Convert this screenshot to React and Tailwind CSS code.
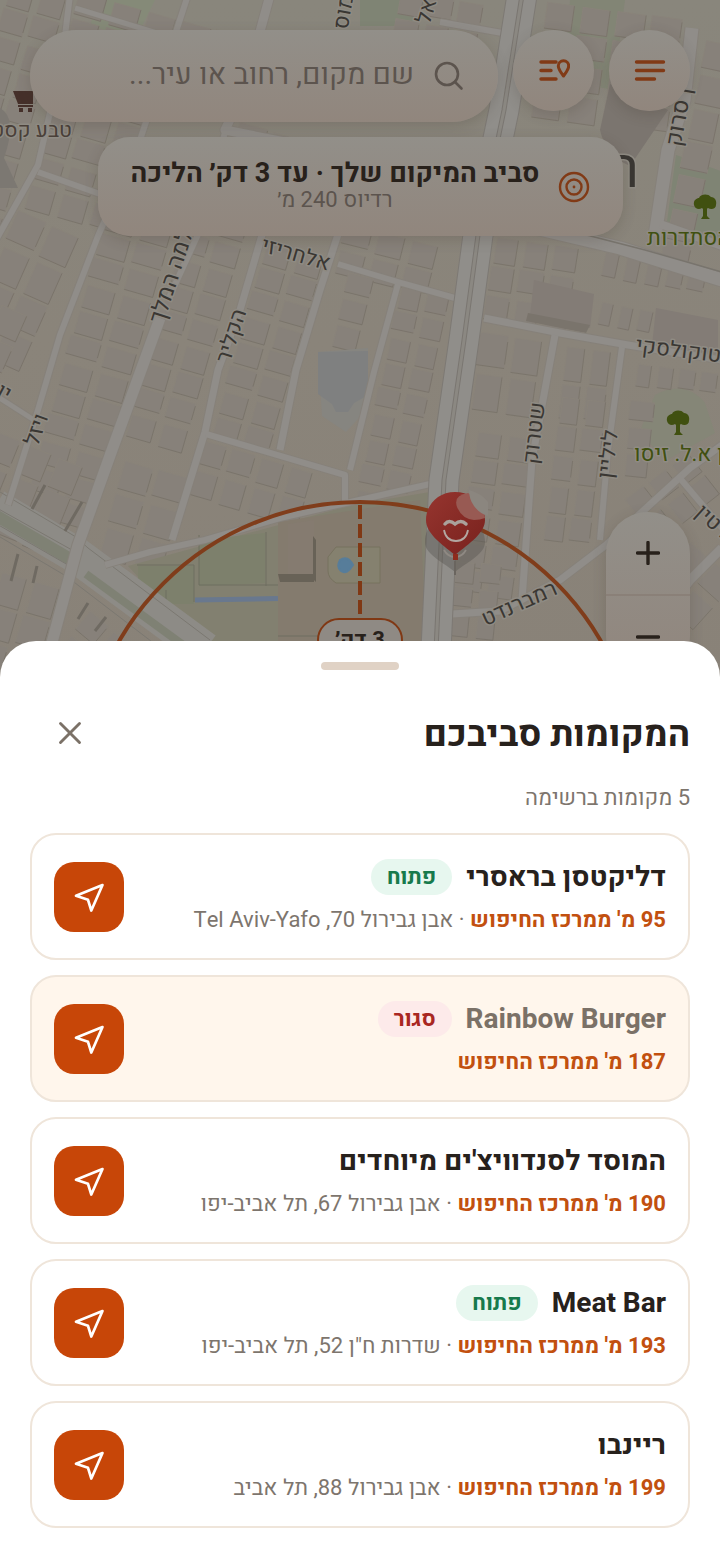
import { X } from "lucide-react";

const places = [
  { name: "דליקטסן בראסרי", status: "open", distance: 95, address: "אבן גבירול 70, Tel Aviv-Yafo" },
  { name: "Rainbow Burger", status: "closed", distance: 187 },
  { name: "המוסד לסנדוויצ'ים מיוחדים", distance: 190, address: "אבן גבירול 67, תל אביב-יפו" },
  { name: "Meat Bar", status: "open", distance: 193, address: 'שדרות ח"ן 52, תל אביב-יפו' },
  { name: "ריינבו", distance: 199, address: "אבן גבירול 88, תל אביב" },
];

/* Blocks of houses: x, y, angle, columns, rows, cell width, cell height */
const blocks = [
  [78, -10, 16, 5, 3, 36, 27],
  [-20, -30, 16, 3, 9, 32, 29],
  [60, 75, 16, 3, 5, 34, 28],
  [18, 210, 24, 2, 4, 36, 38],
  [-30, 290, 24, 2, 7, 34, 34],
  [108, 205, 16, 2, 12, 37, 27],
  [-6, 430, 22, 3, 3, 34, 34],
  [190, 205, 16, 2, 9, 33, 27],
  [124, 460, 16, 2, 3, 36, 34],
  [203, 440, 16, 4, 2, 30, 30],
  [266, 240, 16, 2, 8, 33, 26],
  [345, 222, 14, 3, 2, 34, 27],
  [400, 285, 12, 2, 9, 28, 26],
  [348, 272, 14, 1, 3, 32, 26],
  [495, 235, 9, 3, 3, 30, 30],
  [604, 250, 12, 5, 1, 22, 28],
  [600, 300, 12, 3, 1, 20, 26],
  [480, 332, 8, 2, 2, 34, 40],
  [476, 430, 8, 2, 6, 32, 28],
  [565, 345, 7, 2, 2, 26, 38],
  [560, 395, 7, 2, 5, 26, 30],
  [636, 362, 8, 4, 1, 22, 26],
  [630, 400, 6, 1, 3, 30, 26],
  [625, 500, -38, 3, 2, 28, 28],
  [690, 540, 42, 2, 3, 34, 34],
  [0, 570, 16, 2, 3, 34, 36],
  [90, 610, 40, 2, 2, 30, 30],
  [545, 0, 8, 4, 4, 36, 30],
  [400, -10, 10, 3, 4, 30, 28],
  [706, 40, 12, 1, 7, 34, 34],
  [240, 122, 16, 6, 1, 34, 24],
  [455, 560, 6, 2, 3, 26, 26],
];

const roads = [
  ["M70 -5 L62 60 L38 165 L-4 240", 7],
  ["M75 8 L160 34 L230 60", 6],
  ["M38 172 L100 194 L180 215", 7],
  ["M188 -5 L170 50 L140 140 L98 236 L60 335 L38 410 L8 505", 7],
  ["M228 120 L200 230 L168 300", 7],
  ["M160 318 L112 450 L78 545 L50 650", 12],
  ["M270 -5 L244 90 L225 130 L300 145", 10],
  ["M262 235 L240 310 L218 370 L205 432 L172 540", 8],
  ["M340 228 L320 290 L296 370 L280 450", 8],
  ["M206 434 L345 475 L345 502", 7],
  ["M338 264 L398 282 L462 300", 7],
  ["M398 284 L374 372 L350 470", 7],
  ["M-5 395 L34 420", 6],
  ["M105 565 L150 552 L205 540 L280 518 L355 501 L430 484", 7],
  ["M484 318 L560 333 L628 345 L722 360", 8],
  ["M555 335 L532 460 L522 600", 8],
  ["M622 347 L608 450 L600 540", 7],
  ["M692 28 L684 100 L668 150 L655 236", 14],
  ["M535 228 L620 248 L722 280", 14],
  ["M660 224 L722 246", 9],
  ["M452 614 L500 611 L560 580 L606 545 L690 468 L722 445", 8],
  ["M678 476 L722 528", 7],
  ["M722 548 L690 580 L660 620", 10],
  ["M440 22 L508 34", 7],
];

function Block({ b }) {
  const [x, y, angle, cols, rows, cw, ch] = b;
  const cells = [];
  for (let r = 0; r < rows; r++) {
    for (let c = 0; c < cols; c++) {
      const k = Math.abs(Math.sin(x * 3 + y + r * 7.3 + c * 13.1));
      const w = cw - 5 - k * 4;
      const h = ch - 4 - (1 - k) * 4;
      const px = c * cw + k * 3;
      const py = r * ch + k * 2;
      cells.push(
        <g key={`${r}-${c}`}>
          <path d={`M${px} ${py}h${w}v${h}h${-w}z`} fill="#87817a" stroke="#89837a" strokeWidth="1" />
          <path d={`M${px} ${py + h}h${w}v${-h}`} fill="none" stroke="#787269" strokeWidth="0.8" strokeDasharray={k > 0.5 ? "none" : `${w} 4 ${h * 0.7} 99`} />
        </g>
      );
    }
  }
  return <g transform={`translate(${x} ${y}) rotate(${angle})`}>{cells}</g>;
}

function Label({ x, y, angle = 0, anchor = "middle", size = 22, fill = "#3a3733", children }) {
  return (
    <text
      transform={`translate(${x} ${y}) rotate(${angle})`}
      textAnchor={anchor}
      direction="rtl"
      fontSize={size}
      fill={fill}
      stroke="#8f8b83"
      strokeWidth="3"
      strokeLinejoin="round"
      paintOrder="stroke"
    >
      {children}
    </text>
  );
}

function Tree({ x, y }) {
  return (
    <g transform={`translate(${x} ${y})`} fill="#405010">
      <path d="M-11 -1c-1-5 3-7 5-7 1-4 9-5 12-1 4 0 6 4 5 8 0 4-5 5-8 3-3 2-4 2-6 0-3 2-7 1-8-3z" />
      <path d="M-2 0h4v10l3 3h-9l2-3z" />
    </g>
  );
}

function MapDrawing() {
  return (
    <svg viewBox="0 0 720 680" preserveAspectRatio="xMidYMin slice" className="absolute inset-0 size-full" aria-hidden="true">
      <defs>
        <linearGradient id="land" x1="0" y1="0" x2="0" y2="1">
          <stop offset="0" stopColor="#89867c" />
          <stop offset="0.5" stopColor="#8a847a" />
          <stop offset="1" stopColor="#898278" />
        </linearGradient>
        <linearGradient id="balloon" x1="0" y1="0" x2="1" y2="1">
          <stop offset="0" stopColor="#96352f" />
          <stop offset="1" stopColor="#78211d" />
        </linearGradient>
      </defs>
      <rect width="720" height="680" fill="url(#land)" />
      <path d="M360 0H425L415 26H360z" fill="#7f8474" />
      <path d="M100 0h55l-20 40-45-15z" fill="#858a78" />
      <path d="M570 0h55l-12 90-50 -10z" fill="#828575" />
      <path d="M676 155l50 18v72l-60-16z" fill="#7f8474" />
      <path d="M655 395q30-16 50 8l10 30-50 28-25-30z" fill="#858677" />
      {blocks.map((b) => (
        <Block key={b.join()} b={b} />
      ))}
      <path d="M610 84l58 26-38 56q-24-10-30-36z" fill="#7b756f" />
      <path d="M534 280l60 14-4 34-60-12z" fill="#837c76" />
      <path d="M528 313l62 12-4 8-60-12z" fill="#7a746c" />
      <path d="M656 308l62 12v34l-66-8z" fill="#837c76" />
      <path d="M318 352l50-4v60l-22 24-24-16z" fill="#868580" />
      <path d="M318 352l50-1v44l-14 8-6 9h-12l-4-8-14-10z" fill="#7f8080" />
      <path d="M0 108q18 10 4 50l14 30-18 0z" fill="#7c7872" />

      <path d="M128 566L205 545 352 505 430 492 425 645 200 645z" fill="#828070" />
      <path d="M278 522L420 500 426 645H278z" fill="#847b6e" />
      <path d="M199 540l66-7v50l-66 3z" fill="#7d806c" />
      <path d="M138 566h56v38h-28l-28-16z" fill="#7d806c" />
      <path d="M137 565h57v37M166 590v30M199 535v50h79M266 532v54M278 636h60" fill="none" stroke="#6f6f60" strokeWidth="1" />
      <path d="M288 524l26-4v54h-26z" fill="#857b70" />
      <path d="M278 574h36v8h-34zM313 536l3 4v42l-3-3z" fill="#686257" />
      <path d="M336 547h44v36h-44q-8-5-8-12v-14z" fill="#85816f" stroke="#77725f" strokeWidth="1" />
      <path d="M195 600L278 598.500" stroke="#69788e" strokeWidth="5" />
      <path d="M340 560q8-5 13 5-6 10-12 6-5-4-1-11z" fill="#577d9a" stroke="#577d9a" strokeWidth="2" />

      <path d="M-5 507L76 555 205 650" fill="none" stroke="#8d8b86" strokeWidth="36" />
      <path d="M-5 515L72 560" fill="none" stroke="#7f8174" strokeWidth="12" />
      <path d="M86 574L190 650" fill="none" stroke="#7f8174" strokeWidth="8" />
      <path d="M-5 489L76 537 88 548 210 640M-5 534L66 576 160 648M-5 507L72 550M-5 523L68 565" fill="none" stroke="#7b7871" strokeWidth="1" />

      <g fill="none" strokeLinejoin="round">
        {roads.map(([d, w]) => (
          <path key={d} d={d} stroke="#86817a" strokeWidth={w + 1} />
        ))}
        {roads.map(([d, w]) => (
          <path key={d} d={d} stroke="#908d89" strokeWidth={w - 1} />
        ))}
        <path d="M522 -5L504 110 478 235 464 340 444 480 436 650" stroke="#7d7974" strokeWidth="31" />
        <path d="M522 -5L504 110 478 235 464 340 444 480 436 650" stroke="#908e8a" strokeWidth="29" />
        <path d="M522 -5L504 110 478 235 464 340 444 480 436 650" stroke="#7a7671" strokeWidth="5" />
        <path d="M522 -5L504 110 478 235 464 340 444 480 436 650" stroke="#8b8882" strokeWidth="3" />
        <path d="M575 232L645 250 722 272" stroke="#78746d" strokeWidth="1.500" />
      </g>
      <path d="M45 485l-13 24M82 502l-17 29M18 554l-7 27M37 566l-4 17M88 603l-10 16M106 617l-11 14" stroke="#6f6a62" strokeWidth="3" />

      <Label x={351} y={10} angle={-80}>ימוס</Label>
      <Label x={434} y={10} angle={-74}>ואל</Label>
      <Label x={72} y={137} anchor="start" size={21} fill="#4a4039">טבע קסטרו</Label>
      <g transform="translate(24 100)" fill="#45302a">
        <path d="M-11 -9h20l0 13h-15z" />
        <path d="M-6 5h15v2h-15zM-5 8h4v4h-4zM4 8h4v4h-4z" />
      </g>
      <Label x={639} y={187} anchor="start" size={56}>ר</Label>
      <Label x={686} y={118} angle={-80} size={23}>ן סרוק</Label>
      <Tree x={705} y={206} />
      <Label x={647} y={245} anchor="end" size={22} fill="#405010">ההסתדרות</Label>
      <Label x={181} y={270} angle={-72} size={23}>שלמה המלך</Label>
      <Label x={238} y={338} angle={-72}>הקליר</Label>
      <Label x={294} y={261} angle={16}>אלחריזי</Label>
      <Label x={43} y={432} angle={-70}>ויזל</Label>
      <Label x={-4} y={396} angle={28}>יור</Label>
      <Label x={541} y={434} angle={-83}>שטרוק</Label>
      <Label x={615} y={455} angle={-83}>ליליין</Label>
      <Label x={635} y={352} angle={7} anchor="end">אנטוקולסקי</Label>
      <Tree x={678} y={422} />
      <Label x={634} y={461} anchor="end" size={22} fill="#405010">גן א.ל. זיסו</Label>
      <Label x={694} y={514} angle={42} anchor="end">ברטין</Label>
      <Label x={522} y={610} angle={-24}>רמברנדט</Label>

      <circle cx="360" cy="780" r="278" fill="none" stroke="#803d1b" strokeWidth="4" />
      <path d="M360 505V620" stroke="#803814" strokeWidth="4" strokeDasharray="14 5" />

      <path d="M455 513c17 0 30 13 30 29 0 12-15 18-30 30-15-12-30-18-30-30 0-16 13-29 30-29z" fill="#55524d" opacity="0.4" />
      <path d="M455 492c17 0 30 13 30 28 0 13-15 23-30 35-15-12-29-22-29-35 0-15 12-28 29-28z" fill="url(#balloon)" />
      <path d="M468 493q-15 2-11 14 5 12 17 13 6 0 11-2-2-18-17-25z" fill="#985a53" />
      <path d="M469 490q0 9 5 16 6 8 14 10v-14q-7-9-19-12z" fill="#8b867f" />
      <path d="M445 524q4-5 10 0q6-5 11 0" fill="none" stroke="#aaa29c" strokeWidth="3.500" strokeLinecap="round" />
      <path d="M444 530q2 11 12 11t12-11" fill="none" stroke="#b3a7a1" strokeWidth="1.800" />
      <path d="M444 550q4 7 11 7t11-7" fill="none" stroke="#8f8983" strokeWidth="1.800" />
      <path d="M453 554h5v6h-5z" fill="#8e2c1d" />
      <path d="M455 561v14" stroke="#6a655f" strokeWidth="2" />
    </svg>
  );
}

const glass = "bg-linear-to-b from-[#928f89] to-[#91867d] shadow-[0_4px_14px_rgba(60,50,40,0.2)]";

function MenuIcon() {
  return (
    <svg viewBox="0 0 32 32" className="size-8" fill="none" stroke="#813a16" strokeWidth="3.4" strokeLinecap="round" aria-hidden="true">
      <path d="M2.500 7h27M2.500 15.500h27M2.500 24h18" />
    </svg>
  );
}

function ListPinIcon() {
  return (
    <svg viewBox="0 0 32 32" className="size-8" fill="none" stroke="#813a16" strokeWidth="3.400" strokeLinecap="round" aria-hidden="true">
      <path d="M3 7h15M3 15.500h10M3 24h15" />
      <path d="M25.500 21c-3-4-5.200-7-5.200-10a5.200 5.200 0 0 1 10.400 0c0 3-2.200 6-5.200 10z" strokeWidth="3" strokeLinejoin="round" />
    </svg>
  );
}

function StatusBadge({ status }) {
  return status === "open" ? (
    <span className="flex h-9 items-center rounded-full bg-[#e7f7ef] px-4 text-[22px] font-bold text-[#177a4c]">פתוח</span>
  ) : (
    <span className="flex h-9 items-center rounded-full bg-[#fdeaea] px-4 text-[22px] font-bold text-[#a92722]">סגור</span>
  );
}

function PlaceCard({ place }) {
  const closed = place.status === "closed";
  return (
    <li className={`flex items-center justify-between gap-6 rounded-[26px] border-2 border-[#efe5da] px-[22px] pt-6 pb-[23px] ${closed ? "bg-[#fff6ec]" : "bg-white"}`}>
      <div className="flex min-w-0 flex-col gap-2.5">
        <div className="flex h-9 items-center gap-[14px]">
          <h2 className={`pt-0.5 text-[28px] leading-9 font-bold ${closed ? "text-[#7b7167]" : "text-[#27211c]"}`}>{place.name}</h2>
          {place.status && <StatusBadge status={place.status} />}
        </div>
        <p className="text-[22px] leading-[30px] text-[#7d756d]">
          <span className="font-bold text-[#c2500f]">{place.distance} מ' ממרכז החיפוש</span>
          {place.address && ` · ${place.address}`}
        </p>
      </div>
      <button type="button" aria-label="ניווט" className="flex size-[70px] shrink-0 items-center justify-center rounded-[20px] bg-[#c74608]">
        <svg viewBox="0 0 32 32" className="size-8" fill="none" stroke="#fff" strokeWidth="2.700" strokeLinejoin="round" aria-hidden="true">
          <path d="M29.500 4L3 14.700 15 18.800 18.300 29.500z" />
        </svg>
      </button>
    </li>
  );
}

export default function App() {
  return (
    <main dir="rtl" className="min-h-screen bg-white [font-family:Heebo,Roboto,'Open_Sans',sans-serif]">
      <section aria-label="מפה" className="relative h-[680px] overflow-hidden">
        <MapDrawing />
        <div className="relative flex flex-col items-center gap-[15px] px-[30px] pt-[30px]">
          <div className="flex w-full items-start gap-[15px]">
            <button type="button" aria-label="תפריט" className={`flex size-[81px] shrink-0 items-center justify-center rounded-full ${glass}`}>
              <MenuIcon />
            </button>
            <button type="button" aria-label="רשימת מקומות" className={`flex size-[81px] shrink-0 items-center justify-center rounded-full ${glass}`}>
              <ListPinIcon />
            </button>
            <label className={`flex h-[92px] min-w-0 flex-1 items-center gap-5 rounded-full px-[34px] ${glass}`}>
              <svg viewBox="0 0 30 30" className="size-[30px] shrink-0" fill="none" stroke="#5c544e" strokeWidth="2.600" strokeLinecap="round" aria-hidden="true">
                <circle cx="13" cy="13" r="11" />
                <path d="M21 21L27.500 27.500" />
              </svg>
              <input type="text" aria-label="חיפוש" placeholder="שם מקום, רחוב או עיר..." className="w-full min-w-0 bg-transparent text-[29px] outline-none placeholder:text-[#5c544e]" />
            </label>
          </div>
          <div className={`flex h-[99px] items-center gap-[18px] rounded-[32px] px-[33px] ${glass}`}>
            <svg viewBox="0 0 32 32" className="size-8 shrink-0" fill="none" stroke="#813a16" strokeWidth="2.400" aria-hidden="true">
              <circle cx="16" cy="16" r="14" />
              <circle cx="16" cy="16" r="7.500" />
              <circle cx="16" cy="16" r="1.400" fill="#813a16" stroke="none" />
            </svg>
            <div className="text-center">
              <p className="text-[27px] leading-[26px] font-bold text-[#28211b]">סביב המיקום שלך · עד 3 דק׳ הליכה</p>
              <p className="text-[22px] leading-[26px] text-[#5c544e]">רדיוס 240 מ׳</p>
            </div>
          </div>
        </div>
        <div className="absolute top-[618px] left-1/2 flex h-11 w-[86px] -translate-x-1/2 items-center justify-center rounded-[22px] border-2 border-[#803814] bg-[#8f8a84] text-[22px] font-bold text-[#28211b]">
          3 דק׳
        </div>
        <div className={`absolute top-[512px] right-[30px] flex w-[84px] flex-col overflow-hidden rounded-[42px] ${glass}`}>
          <button type="button" aria-label="התקרבות" className="flex h-[84px] items-center justify-center border-b-2 border-[#8a8078]">
            <svg viewBox="0 0 24 24" className="size-6" stroke="#28211b" strokeWidth="3.400" strokeLinecap="round" aria-hidden="true">
              <path d="M1.500 12h21M12 1.500v21" />
            </svg>
          </button>
          <button type="button" aria-label="התרחקות" className="flex h-[82px] items-center justify-center">
            <svg viewBox="0 0 24 24" className="size-6" stroke="#28211b" strokeWidth="3.400" strokeLinecap="round" aria-hidden="true">
              <path d="M1.500 12h21" />
            </svg>
          </button>
        </div>
      </section>

      <section aria-label="המקומות סביבכם" className="relative -mt-[39px] rounded-t-[36px] bg-white px-[30px] pt-[21px] pb-[29px]">
        <div className="mx-auto h-2 w-[78px] rounded-full bg-[#e0d2c5]" />
        <header className="mt-[23px] flex h-20 items-center justify-between">
          <h1 className="pt-1 text-[36px] font-bold text-[#27211c]">המקומות סביבכם</h1>
          <button type="button" aria-label="סגירה" className="flex size-20 items-center justify-center text-[#7b7167]">
            <X className="size-[38px]" strokeWidth={1.8} />
          </button>
        </header>
        <p className="mt-2.5 text-[22px] leading-[30px] text-[#7d756d]">5 מקומות ברשימה</p>
        <ul className="mt-5 flex flex-col gap-[15px]">
          {places.map((place) => (
            <PlaceCard key={place.name} place={place} />
          ))}
        </ul>
      </section>
    </main>
  );
}
